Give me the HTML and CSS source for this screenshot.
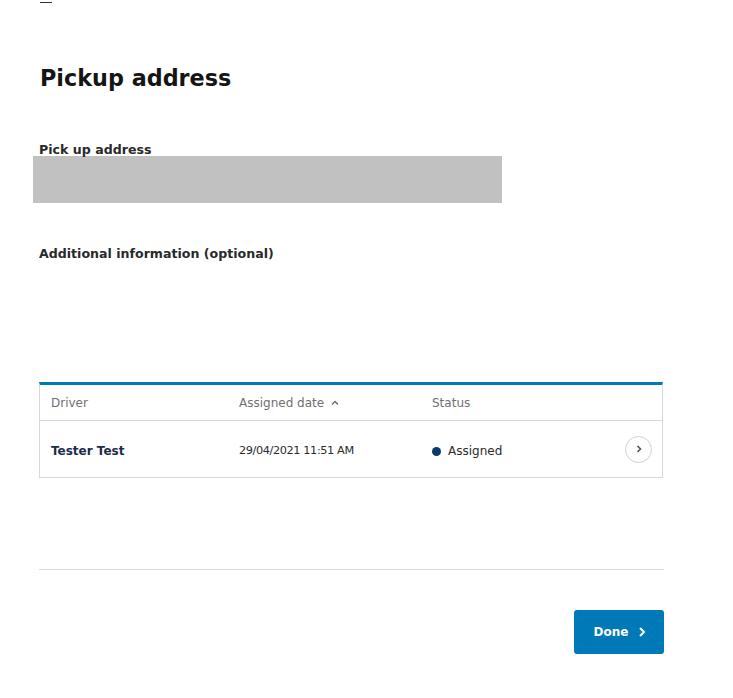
FILE: index.html
```html
<!DOCTYPE html>
<html lang="en">
<head>
<meta charset="utf-8">
<title>Pickup address</title>
<link rel="stylesheet" href="styles.css">
</head>
<body>
<div class="page">
  <div class="dash"></div>
  <h1 class="title">Pickup address</h1>

  <div class="field">
    <label class="label">Pick up address</label>
    <div class="redacted"></div>
  </div>

  <div class="field field-extra">
    <label class="label">Additional information (optional)</label>
  </div>

  <div class="table">
    <div class="row head">
      <div class="cell c-driver">Driver</div>
      <div class="cell c-date">Assigned date <svg class="sort" width="8" height="6" viewBox="0 0 8 6"><path d="M1 4.5 L4 1.5 L7 4.5" fill="none" stroke="#6b6b6b" stroke-width="1.4"/></svg></div>
      <div class="cell c-status">Status</div>
      <div class="cell c-action"></div>
    </div>
    <div class="row body">
      <div class="cell c-driver name">Tester Test</div>
      <div class="cell c-date date">29/04/2021 11:51 AM</div>
      <div class="cell c-status"><span class="dot"></span>Assigned</div>
      <div class="cell c-action">
        <span class="circle"><svg width="8" height="10" viewBox="0 0 8 10"><path d="M2.5 2 L5.5 5 L2.5 8" fill="none" stroke="#555" stroke-width="1.6"/></svg></span>
      </div>
    </div>
  </div>

  <div class="divider"></div>

  <div class="actions">
    <button class="done">Done <svg width="8" height="12" viewBox="0 0 8 12"><path d="M2 2 L6 6 L2 10" fill="none" stroke="#fff" stroke-width="2"/></svg></button>
  </div>
</div>
</body>
</html>
```
FILE: styles.css
```css
* { box-sizing: border-box; }
html, body { margin: 0; padding: 0; background: #fff; }
body { font-family: "DejaVu Sans", sans-serif; color: #222; }

.page {
  width: 664px;
  padding-left: 39px;
  padding-top: 2px;
}

.dash {
  width: 12px;
  height: 1px;
  margin-left: 1px;
  background: #333;
}

.title {
  margin: 59px 0 0 1px;
  font-size: 22.3px;
  line-height: 32px;
  font-weight: 700;
  color: #151515;
}

.field { margin-top: 49px; }
.label {
  display: block;
  font-size: 12.6px;
  line-height: 13px;
  font-weight: 700;
  color: #2a2a2a;
}
.redacted {
  margin-left: -6px;
  width: 469px;
  height: 47px;
  background: #c1c1c1;
}

.field-extra { margin-top: 44px; }

.table {
  margin-top: 122px;
  width: 624px;
  border: 1px solid #d7d8db;
  border-top: 3px solid #0079b8;
}
.row { display: flex; align-items: center; }
.head { height: 36px; border-bottom: 1px solid #d7d8db; padding-top: 1px; }
.body { height: 56px; padding-top: 3px; }
.cell { font-size: 12px; }
.c-driver { width: 199px; padding-left: 11px; }
.c-date { width: 193px; }
.c-status { flex: 1; display: flex; align-items: center; }
.c-action { width: 60px; display: flex; justify-content: flex-end; padding-right: 10px; }
.body .c-action { margin-top: -3px; }

.head .cell { color: #707070; font-size: 12px; }
.sort { margin-left: 3px; vertical-align: 1px; }

.body .cell { color: #2b2b2b; }
.body .date { font-size: 11.3px; letter-spacing: -0.4px; }
.body .name { color: #1c2b4b; font-weight: 700; font-size: 12px; }
.dot {
  width: 9px; height: 9px; border-radius: 50%;
  background: #0b3b6e; margin-right: 7px; margin-top: 2px;
}
.circle {
  width: 27px; height: 27px; border-radius: 50%;
  border: 1px solid #d0d0d0;
  display: flex; align-items: center; justify-content: center;
}

.divider {
  margin-top: 91px;
  width: 625px;
  height: 1px;
  background: #dcdcdc;
}

.actions { display: flex; justify-content: flex-end; width: 625px; margin-top: 40px; }
.done {
  width: 90px; height: 44px;
  border: 0; border-radius: 3px;
  background: #0079b8;
  color: #fff;
  font-family: "DejaVu Sans", sans-serif;
  font-weight: 700;
  font-size: 12px;
  display: flex; align-items: center; justify-content: center; gap: 10px;
  padding: 0 0 0 2px;
}
```
